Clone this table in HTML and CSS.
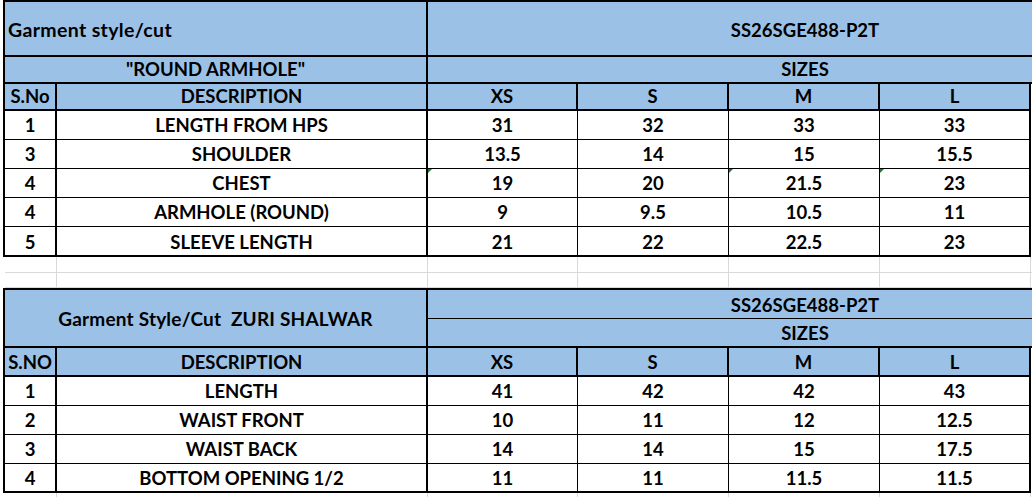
FILE: index.html
```html
<!DOCTYPE html>
<html>
<head>
<meta charset="utf-8">
<link rel="stylesheet" href="styles.css">
</head>
<body>
<div class="sheet">
  <div class="tbl t1">
    <div class="c h span2 title">Garment style/cut</div>
    <div class="c h span5 open mid">SS26SGE488-P2T</div>
    <div class="c h span2 lowc">"ROUND ARMHOLE"</div>
    <div class="c h span5 open lowc">SIZES</div>
    <div class="c h low first">S.No</div>
    <div class="c h low">DESCRIPTION</div>
    <div class="c h low">XS</div>
    <div class="c h low">S</div>
    <div class="c h low">M</div>
    <div class="c h low last">L</div>

    <div class="c d sn">1</div><div class="c d desc">LENGTH FROM HPS</div><div class="c d">31</div><div class="c d">32</div><div class="c d">33</div><div class="c d last">33</div>
    <div class="c d sn">3</div><div class="c d desc">SHOULDER</div><div class="c d">13.5</div><div class="c d">14</div><div class="c d">15</div><div class="c d last">15.5</div>
    <div class="c d sn">4</div><div class="c d desc">CHEST</div><div class="c d flag">19</div><div class="c d">20</div><div class="c d flag">21.5</div><div class="c d last flag">23</div>
    <div class="c d sn">4</div><div class="c d desc">ARMHOLE (ROUND)</div><div class="c d">9</div><div class="c d">9.5</div><div class="c d">10.5</div><div class="c d last">11</div>
    <div class="c d sn bot">5</div><div class="c d desc bot">SLEEVE LENGTH</div><div class="c d bot">21</div><div class="c d bot">22</div><div class="c d bot">22.5</div><div class="c d last bot">23</div>
  </div>

  <div class="grid-gap">
    <div></div><div></div><div></div><div></div><div></div><div></div><div></div>
    <div></div><div></div><div></div><div></div><div></div><div></div><div></div>
  </div>

  <div class="tbl t2">
    <div class="c h span2 rows2 title2">Garment Style/Cut&nbsp; ZURI SHALWAR</div>
    <div class="c h span5 open thin">SS26SGE488-P2T</div>
    <div class="c h span5 open">SIZES</div>
    <div class="c h low first">S.NO</div>
    <div class="c h low">DESCRIPTION</div>
    <div class="c h low">XS</div>
    <div class="c h low">S</div>
    <div class="c h low">M</div>
    <div class="c h low last">L</div>

    <div class="c d sn">1</div><div class="c d desc">LENGTH</div><div class="c d">41</div><div class="c d">42</div><div class="c d">42</div><div class="c d last">43</div>
    <div class="c d sn">2</div><div class="c d desc">WAIST FRONT</div><div class="c d">10</div><div class="c d">11</div><div class="c d">12</div><div class="c d last">12.5</div>
    <div class="c d sn">3</div><div class="c d desc">WAIST BACK</div><div class="c d">14</div><div class="c d">14</div><div class="c d">15</div><div class="c d last">17.5</div>
    <div class="c d sn bot">4</div><div class="c d desc bot">BOTTOM OPENING 1/2</div><div class="c d bot">11</div><div class="c d bot">11</div><div class="c d bot">11.5</div><div class="c d last bot">11.5</div>
  </div>

  <div class="grid-tail">
    <div></div><div></div><div></div><div></div><div></div><div></div><div></div>
  </div>
</div>
</body>
</html>
```

FILE: styles.css
```css
html, body {
  margin: 0;
  padding: 0;
  background: #ffffff;
  overflow: hidden;
}

.sheet {
  width: 1032px;
  height: 497px;
  overflow: hidden;
  font-family: "Lato", "Liberation Sans", sans-serif;
  font-weight: bold;
  font-size: 18.5px;
  color: #000;
}

.tbl {
  display: grid;
  grid-template-columns: 52px 371px 150px 151px 151px 151px 151px;
  width: max-content;
  margin-left: 3px;
  border-top: 2px solid #000;
  border-left: 2px solid #000;
}

.t1 {
  grid-template-rows: 55px 27px 27px 29px 29px 29px 29px 30px;
}

.t2 {
  grid-template-rows: 29px 29px 29px 29px 29px 29px 29px;
}

.c {
  box-sizing: border-box;
  display: flex;
  align-items: flex-end;
  justify-content: center;
  padding-bottom: 3px;
  line-height: 22px;
  white-space: nowrap;
  position: relative;
}

.first,
.sn {
  grid-column: 1;
}

.h {
  background: #9bc2e6;
  border-right: 2px solid #000;
  border-bottom: 2px solid #000;
}

.h.open {
  border-right: none;
}

.h.thin {
  border-bottom: 1px solid #000;
}

.h.low,
.h.lowc {
  padding-bottom: 2px;
}

.span2 {
  grid-column: span 2;
}

.span5 {
  grid-column: span 5;
}

.rows2 {
  grid-row: span 2;
}

.title {
  justify-content: flex-start;
  align-items: center;
  padding: 3px 0 0 3px;
  font-size: 19.5px;
  letter-spacing: 0.35px;
}

.title2 {
  align-items: center;
  padding: 2px 0 0 0;
  font-size: 19px;
  letter-spacing: 0.2px;
}

.mid {
  align-items: center;
  padding: 2px 0 0 0;
}

.t2 .h.span5 {
  padding: 0 0 2px 0;
}

.d {
  background: #fff;
  border-right: 1px solid #000;
  border-bottom: 1px solid #000;
}

.d.sn,
.d.desc,
.d.last {
  border-right-width: 2px;
}

.d.bot {
  border-bottom-width: 2px;
  padding-bottom: 2px;
}

.flag::before {
  content: "";
  position: absolute;
  left: 0;
  top: 0;
  border-top: 4px solid #1f7a35;
  border-right: 4px solid transparent;
}

.grid-gap,
.grid-tail {
  display: grid;
  grid-template-columns: 52px 371px 150px 151px 151px 151px 151px;
  width: max-content;
  margin-left: 5px;
}

.grid-gap {
  grid-template-rows: 16px 15px;
}

.grid-tail {
  grid-template-rows: 10px;
}

.grid-gap > div,
.grid-tail > div {
  box-sizing: border-box;
  border-right: 1px solid #d9d9d9;
  border-bottom: 1px solid #d9d9d9;
}

.grid-tail > div {
  border-bottom: none;
}
```
